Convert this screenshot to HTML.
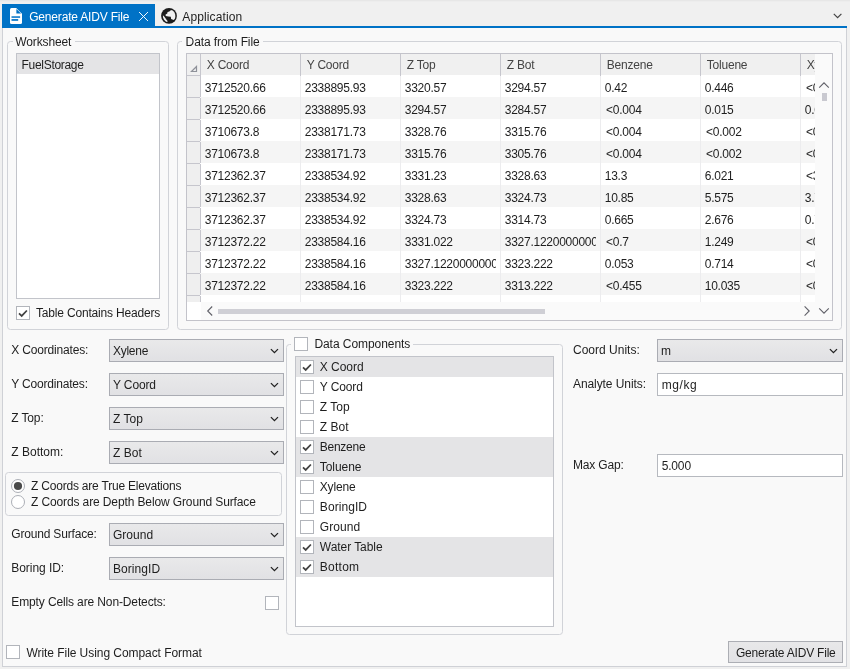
<!DOCTYPE html><html><head><meta charset="utf-8"><title>Generate AIDV File</title><style>
html,body{margin:0;padding:0;}
body{width:850px;height:669px;overflow:hidden;background:#f0f0f0;position:relative;font-family:"Liberation Sans",sans-serif;font-size:12px;color:#1e1e1e;}
div,span,svg{position:absolute;box-sizing:border-box;}
.t{white-space:nowrap;line-height:16px;height:16px;letter-spacing:-0.3px;}
.gb{border:1px solid #d1d3d8;border-radius:3.5px;}
.cb{width:14px;height:14px;background:#fff;border:1px solid #b2b5bb;}
.combo{height:23px;border:1px solid #aaacb3;background:linear-gradient(#e9e9ea,#e1e1e4);}
.tb{height:23px;border:1px solid #b6b9bf;background:#fff;}
.lb{border:1px solid #c2c4ca;background:#fff;}
.sel{background:#e4e4e6;}
</style></head><body><div id="root" style="left:0;top:0;width:850px;height:669px;will-change:transform">
<div style="left:0;top:0;width:850px;height:2px;background:linear-gradient(#e4e4e4,#f0f0f0)"></div>
<div style="left:2px;top:28px;width:845px;height:639px;background:#f9f9f9;border:1px solid #cfd1d6;border-top:none"></div>
<div style="left:2px;top:26px;width:845px;height:2px;background:#0072c6"></div>
<div style="left:2px;top:4px;width:153px;height:24px;background:#0072c6"></div>
<svg style="left:10px;top:8px" width="12" height="16" viewBox="0 0 12 16"><path d="M1.5 0 H6.2 L12 5.8 V14.5 Q12 16 10.5 16 H1.5 Q0 16 0 14.5 V1.5 Q0 0 1.5 0 Z" fill="#fff"/><path d="M6.4 0.9 V5.6 H11.1 Z" fill="#0072c6"/><rect x="1.5" y="8.3" width="8.6" height="1.5" fill="#0072c6"/><rect x="1.5" y="11.1" width="6.7" height="1.7" fill="#0072c6"/></svg>
<svg style="left:138px;top:11px" width="12" height="12" viewBox="0 0 12 12"><path d="M1 1 L10 10 M10 1 L1 10" stroke="#fff" stroke-width="0.95" fill="none"/></svg>
<svg style="left:161px;top:8px" width="16" height="16" viewBox="0 0 16 16"><circle cx="8" cy="7.9" r="7.9" fill="#1c1c1c"/><path d="M9.8 1.9 L11.7 2.6 L13.4 4.3 L14.2 6.4 L14.35 8.5 L14 10.4 L12.8 12.1 L11.4 11.4 L10.1 11.1 L9.8 8.8 L7.5 8.6 L4.7 8 L4.6 6.4 L6.3 5.6 L6.4 4.2 L8.1 3.4 L9.2 3 Z" fill="#f0f0f0"/><path d="M1.9 7.2 L2 9.6 L2.9 11.6 L4.4 13.2 L5.9 13.9 L6.8 13.3 L5.3 11.6 L4.3 10.1 L3.2 8.4 Z" fill="#f0f0f0"/></svg>
<svg style="left:832px;top:12px" width="12" height="8" viewBox="0 0 12 8"><path d="M1.8 1.8 L5.6 5.6 L9.4 1.8" stroke="#444" stroke-width="1.2" fill="none"/></svg>
<div class="gb" style="left:7px;top:41px;width:162px;height:289px"></div>
<div style="left:13px;top:36px;width:62px;height:12px;background:#f9f9f9"></div>
<div class="lb" style="left:16px;top:53px;width:144px;height:246px"><div class="sel" style="left:0;top:0;width:142px;height:20px"></div></div>
<div class="cb" style="left:16px;top:306px"></div>
<svg style="left:16px;top:306px" width="14" height="14" viewBox="0 0 14 14"><path d="M3 7.3 L5.7 9.9 L10.9 4.5" stroke="#424242" stroke-width="1.75" fill="none"/></svg>
<div class="gb" style="left:177px;top:41px;width:665px;height:289px"></div>
<div style="left:182px;top:36px;width:81px;height:12px;background:#f9f9f9"></div>
<div style="left:186px;top:53px;width:647px;height:268px;border:1px solid #c3c3ca;background:#fff;overflow:hidden" id="grid">
<div style="left:0;top:0;width:628px;height:22px;background:#f0f0f0;border-bottom:1px solid #c6c6cd"></div>
<div style="left:13px;top:21px;width:615px;height:22px;background:#fff"></div>
<div style="left:0;top:22px;width:14px;height:22px;background:#efefef;border-right:1px solid #c6c6cd;border-bottom:1px solid #c6c6cd"></div>
<div style="left:13px;top:43px;width:615px;height:23px;background:#f5f5f5"></div>
<div style="left:0;top:44px;width:14px;height:22px;background:#efefef;border-right:1px solid #c6c6cd;border-bottom:1px solid #c6c6cd"></div>
<div style="left:13px;top:65px;width:615px;height:22px;background:#fff"></div>
<div style="left:0;top:66px;width:14px;height:22px;background:#efefef;border-right:1px solid #c6c6cd;border-bottom:1px solid #c6c6cd"></div>
<div style="left:13px;top:87px;width:615px;height:23px;background:#f5f5f5"></div>
<div style="left:0;top:88px;width:14px;height:22px;background:#efefef;border-right:1px solid #c6c6cd;border-bottom:1px solid #c6c6cd"></div>
<div style="left:13px;top:109px;width:615px;height:22px;background:#fff"></div>
<div style="left:0;top:110px;width:14px;height:22px;background:#efefef;border-right:1px solid #c6c6cd;border-bottom:1px solid #c6c6cd"></div>
<div style="left:13px;top:131px;width:615px;height:23px;background:#f5f5f5"></div>
<div style="left:0;top:132px;width:14px;height:22px;background:#efefef;border-right:1px solid #c6c6cd;border-bottom:1px solid #c6c6cd"></div>
<div style="left:13px;top:153px;width:615px;height:22px;background:#fff"></div>
<div style="left:0;top:154px;width:14px;height:22px;background:#efefef;border-right:1px solid #c6c6cd;border-bottom:1px solid #c6c6cd"></div>
<div style="left:13px;top:175px;width:615px;height:23px;background:#f5f5f5"></div>
<div style="left:0;top:176px;width:14px;height:22px;background:#efefef;border-right:1px solid #c6c6cd;border-bottom:1px solid #c6c6cd"></div>
<div style="left:13px;top:197px;width:615px;height:22px;background:#fff"></div>
<div style="left:0;top:198px;width:14px;height:22px;background:#efefef;border-right:1px solid #c6c6cd;border-bottom:1px solid #c6c6cd"></div>
<div style="left:13px;top:219px;width:615px;height:23px;background:#f5f5f5"></div>
<div style="left:0;top:220px;width:14px;height:22px;background:#efefef;border-right:1px solid #c6c6cd;border-bottom:1px solid #c6c6cd"></div>
<div style="left:13px;top:241px;width:615px;height:22px;background:#fff"></div>
<div style="left:0;top:242px;width:14px;height:22px;background:#efefef;border-right:1px solid #c6c6cd;border-bottom:1px solid #c6c6cd"></div>
<div style="left:0;top:0;width:14px;height:22px;border-right:1px solid #c6c6cd"></div>
<svg style="left:3px;top:11px" width="8" height="8" viewBox="0 0 8 8"><path d="M6.5 1.5 V6.5 H1.5 Z" stroke="#8e9199" stroke-width="1.2" fill="none"/></svg>
<div style="left:113px;top:0;width:1px;height:22px;background:#c6c6cd"></div>
<div style="left:113px;top:22px;width:1px;height:226px;background:#ececee"></div>
<div style="left:213px;top:0;width:1px;height:22px;background:#c6c6cd"></div>
<div style="left:213px;top:22px;width:1px;height:226px;background:#ececee"></div>
<div style="left:313px;top:0;width:1px;height:22px;background:#c6c6cd"></div>
<div style="left:313px;top:22px;width:1px;height:226px;background:#ececee"></div>
<div style="left:413px;top:0;width:1px;height:22px;background:#c6c6cd"></div>
<div style="left:413px;top:22px;width:1px;height:226px;background:#ececee"></div>
<div style="left:513px;top:0;width:1px;height:22px;background:#c6c6cd"></div>
<div style="left:513px;top:22px;width:1px;height:226px;background:#ececee"></div>
<div style="left:613px;top:0;width:1px;height:22px;background:#c6c6cd"></div>
<div style="left:613px;top:22px;width:1px;height:226px;background:#ececee"></div>
<div style="left:713px;top:0;width:1px;height:22px;background:#c6c6cd"></div>
<div style="left:713px;top:22px;width:1px;height:226px;background:#ececee"></div>
<div style="left:14px;top:0;width:95px;height:22px;overflow:hidden"><span class="t" style="left:5.7px;top:3px;color:#444;letter-spacing:-0.2px">X Coord</span></div>
<div style="left:114px;top:0;width:95px;height:22px;overflow:hidden"><span class="t" style="left:5.7px;top:3px;color:#444;letter-spacing:-0.2px">Y Coord</span></div>
<div style="left:214px;top:0;width:95px;height:22px;overflow:hidden"><span class="t" style="left:5.7px;top:3px;color:#444;letter-spacing:-0.2px">Z Top</span></div>
<div style="left:314px;top:0;width:95px;height:22px;overflow:hidden"><span class="t" style="left:5.7px;top:3px;color:#444;letter-spacing:-0.2px">Z Bot</span></div>
<div style="left:414px;top:0;width:95px;height:22px;overflow:hidden"><span class="t" style="left:5.7px;top:3px;color:#444;letter-spacing:-0.2px">Benzene</span></div>
<div style="left:514px;top:0;width:95px;height:22px;overflow:hidden"><span class="t" style="left:5.7px;top:3px;color:#444;letter-spacing:-0.2px">Toluene</span></div>
<div style="left:614px;top:0;width:95px;height:22px;overflow:hidden"><span class="t" style="left:5.7px;top:3px;color:#444;letter-spacing:-0.2px">Xylene</span></div>
<div style="left:14px;top:22px;width:94.8px;height:22px;overflow:hidden"><span class="t" style="left:3.8px;top:4px;letter-spacing:-0.26px">3712520.66</span></div>
<div style="left:114px;top:22px;width:94.8px;height:22px;overflow:hidden"><span class="t" style="left:3.8px;top:4px;letter-spacing:-0.26px">2338895.93</span></div>
<div style="left:214px;top:22px;width:94.8px;height:22px;overflow:hidden"><span class="t" style="left:3.8px;top:4px;letter-spacing:-0.26px">3320.57</span></div>
<div style="left:314px;top:22px;width:94.8px;height:22px;overflow:hidden"><span class="t" style="left:3.8px;top:4px;letter-spacing:-0.26px">3294.57</span></div>
<div style="left:414px;top:22px;width:94.8px;height:22px;overflow:hidden"><span class="t" style="left:3.8px;top:4px;letter-spacing:-0.26px">0.42</span></div>
<div style="left:514px;top:22px;width:94.8px;height:22px;overflow:hidden"><span class="t" style="left:3.8px;top:4px;letter-spacing:-0.26px">0.446</span></div>
<div style="left:614px;top:22px;width:94.8px;height:22px;overflow:hidden"><span class="t" style="left:5.1px;top:4px;letter-spacing:-0.26px">&lt;0.004</span></div>
<div style="left:14px;top:44px;width:94.8px;height:22px;overflow:hidden"><span class="t" style="left:3.8px;top:4px;letter-spacing:-0.26px">3712520.66</span></div>
<div style="left:114px;top:44px;width:94.8px;height:22px;overflow:hidden"><span class="t" style="left:3.8px;top:4px;letter-spacing:-0.26px">2338895.93</span></div>
<div style="left:214px;top:44px;width:94.8px;height:22px;overflow:hidden"><span class="t" style="left:3.8px;top:4px;letter-spacing:-0.26px">3294.57</span></div>
<div style="left:314px;top:44px;width:94.8px;height:22px;overflow:hidden"><span class="t" style="left:3.8px;top:4px;letter-spacing:-0.26px">3284.57</span></div>
<div style="left:414px;top:44px;width:94.8px;height:22px;overflow:hidden"><span class="t" style="left:5.1px;top:4px;letter-spacing:-0.26px">&lt;0.004</span></div>
<div style="left:514px;top:44px;width:94.8px;height:22px;overflow:hidden"><span class="t" style="left:3.8px;top:4px;letter-spacing:-0.26px">0.015</span></div>
<div style="left:614px;top:44px;width:94.8px;height:22px;overflow:hidden"><span class="t" style="left:3.8px;top:4px;letter-spacing:-0.26px">0.012</span></div>
<div style="left:14px;top:66px;width:94.8px;height:22px;overflow:hidden"><span class="t" style="left:3.8px;top:4px;letter-spacing:-0.26px">3710673.8</span></div>
<div style="left:114px;top:66px;width:94.8px;height:22px;overflow:hidden"><span class="t" style="left:3.8px;top:4px;letter-spacing:-0.26px">2338171.73</span></div>
<div style="left:214px;top:66px;width:94.8px;height:22px;overflow:hidden"><span class="t" style="left:3.8px;top:4px;letter-spacing:-0.26px">3328.76</span></div>
<div style="left:314px;top:66px;width:94.8px;height:22px;overflow:hidden"><span class="t" style="left:3.8px;top:4px;letter-spacing:-0.26px">3315.76</span></div>
<div style="left:414px;top:66px;width:94.8px;height:22px;overflow:hidden"><span class="t" style="left:5.1px;top:4px;letter-spacing:-0.26px">&lt;0.004</span></div>
<div style="left:514px;top:66px;width:94.8px;height:22px;overflow:hidden"><span class="t" style="left:5.1px;top:4px;letter-spacing:-0.26px">&lt;0.002</span></div>
<div style="left:614px;top:66px;width:94.8px;height:22px;overflow:hidden"><span class="t" style="left:5.1px;top:4px;letter-spacing:-0.26px">&lt;0.004</span></div>
<div style="left:14px;top:88px;width:94.8px;height:22px;overflow:hidden"><span class="t" style="left:3.8px;top:4px;letter-spacing:-0.26px">3710673.8</span></div>
<div style="left:114px;top:88px;width:94.8px;height:22px;overflow:hidden"><span class="t" style="left:3.8px;top:4px;letter-spacing:-0.26px">2338171.73</span></div>
<div style="left:214px;top:88px;width:94.8px;height:22px;overflow:hidden"><span class="t" style="left:3.8px;top:4px;letter-spacing:-0.26px">3315.76</span></div>
<div style="left:314px;top:88px;width:94.8px;height:22px;overflow:hidden"><span class="t" style="left:3.8px;top:4px;letter-spacing:-0.26px">3305.76</span></div>
<div style="left:414px;top:88px;width:94.8px;height:22px;overflow:hidden"><span class="t" style="left:5.1px;top:4px;letter-spacing:-0.26px">&lt;0.004</span></div>
<div style="left:514px;top:88px;width:94.8px;height:22px;overflow:hidden"><span class="t" style="left:5.1px;top:4px;letter-spacing:-0.26px">&lt;0.002</span></div>
<div style="left:614px;top:88px;width:94.8px;height:22px;overflow:hidden"><span class="t" style="left:5.1px;top:4px;letter-spacing:-0.26px">&lt;0.004</span></div>
<div style="left:14px;top:110px;width:94.8px;height:22px;overflow:hidden"><span class="t" style="left:3.8px;top:4px;letter-spacing:-0.26px">3712362.37</span></div>
<div style="left:114px;top:110px;width:94.8px;height:22px;overflow:hidden"><span class="t" style="left:3.8px;top:4px;letter-spacing:-0.26px">2338534.92</span></div>
<div style="left:214px;top:110px;width:94.8px;height:22px;overflow:hidden"><span class="t" style="left:3.8px;top:4px;letter-spacing:-0.26px">3331.23</span></div>
<div style="left:314px;top:110px;width:94.8px;height:22px;overflow:hidden"><span class="t" style="left:3.8px;top:4px;letter-spacing:-0.26px">3328.63</span></div>
<div style="left:414px;top:110px;width:94.8px;height:22px;overflow:hidden"><span class="t" style="left:3.8px;top:4px;letter-spacing:-0.26px">13.3</span></div>
<div style="left:514px;top:110px;width:94.8px;height:22px;overflow:hidden"><span class="t" style="left:3.8px;top:4px;letter-spacing:-0.26px">6.021</span></div>
<div style="left:614px;top:110px;width:94.8px;height:22px;overflow:hidden"><span class="t" style="left:5.1px;top:4px;letter-spacing:-0.26px">&lt;3.5</span></div>
<div style="left:14px;top:132px;width:94.8px;height:22px;overflow:hidden"><span class="t" style="left:3.8px;top:4px;letter-spacing:-0.26px">3712362.37</span></div>
<div style="left:114px;top:132px;width:94.8px;height:22px;overflow:hidden"><span class="t" style="left:3.8px;top:4px;letter-spacing:-0.26px">2338534.92</span></div>
<div style="left:214px;top:132px;width:94.8px;height:22px;overflow:hidden"><span class="t" style="left:3.8px;top:4px;letter-spacing:-0.26px">3328.63</span></div>
<div style="left:314px;top:132px;width:94.8px;height:22px;overflow:hidden"><span class="t" style="left:3.8px;top:4px;letter-spacing:-0.26px">3324.73</span></div>
<div style="left:414px;top:132px;width:94.8px;height:22px;overflow:hidden"><span class="t" style="left:3.8px;top:4px;letter-spacing:-0.26px">10.85</span></div>
<div style="left:514px;top:132px;width:94.8px;height:22px;overflow:hidden"><span class="t" style="left:3.8px;top:4px;letter-spacing:-0.26px">5.575</span></div>
<div style="left:614px;top:132px;width:94.8px;height:22px;overflow:hidden"><span class="t" style="left:3.8px;top:4px;letter-spacing:-0.26px">3.725</span></div>
<div style="left:14px;top:154px;width:94.8px;height:22px;overflow:hidden"><span class="t" style="left:3.8px;top:4px;letter-spacing:-0.26px">3712362.37</span></div>
<div style="left:114px;top:154px;width:94.8px;height:22px;overflow:hidden"><span class="t" style="left:3.8px;top:4px;letter-spacing:-0.26px">2338534.92</span></div>
<div style="left:214px;top:154px;width:94.8px;height:22px;overflow:hidden"><span class="t" style="left:3.8px;top:4px;letter-spacing:-0.26px">3324.73</span></div>
<div style="left:314px;top:154px;width:94.8px;height:22px;overflow:hidden"><span class="t" style="left:3.8px;top:4px;letter-spacing:-0.26px">3314.73</span></div>
<div style="left:414px;top:154px;width:94.8px;height:22px;overflow:hidden"><span class="t" style="left:3.8px;top:4px;letter-spacing:-0.26px">0.665</span></div>
<div style="left:514px;top:154px;width:94.8px;height:22px;overflow:hidden"><span class="t" style="left:3.8px;top:4px;letter-spacing:-0.26px">2.676</span></div>
<div style="left:614px;top:154px;width:94.8px;height:22px;overflow:hidden"><span class="t" style="left:3.8px;top:4px;letter-spacing:-0.26px">0.75</span></div>
<div style="left:14px;top:176px;width:94.8px;height:22px;overflow:hidden"><span class="t" style="left:3.8px;top:4px;letter-spacing:-0.26px">3712372.22</span></div>
<div style="left:114px;top:176px;width:94.8px;height:22px;overflow:hidden"><span class="t" style="left:3.8px;top:4px;letter-spacing:-0.26px">2338584.16</span></div>
<div style="left:214px;top:176px;width:94.8px;height:22px;overflow:hidden"><span class="t" style="left:3.8px;top:4px;letter-spacing:-0.26px">3331.022</span></div>
<div style="left:314px;top:176px;width:94.8px;height:22px;overflow:hidden"><span class="t" style="left:3.8px;top:4px;letter-spacing:-0.26px">3327.1220000000003</span></div>
<div style="left:414px;top:176px;width:94.8px;height:22px;overflow:hidden"><span class="t" style="left:5.1px;top:4px;letter-spacing:-0.26px">&lt;0.7</span></div>
<div style="left:514px;top:176px;width:94.8px;height:22px;overflow:hidden"><span class="t" style="left:3.8px;top:4px;letter-spacing:-0.26px">1.249</span></div>
<div style="left:614px;top:176px;width:94.8px;height:22px;overflow:hidden"><span class="t" style="left:5.1px;top:4px;letter-spacing:-0.26px">&lt;0.7</span></div>
<div style="left:14px;top:198px;width:94.8px;height:22px;overflow:hidden"><span class="t" style="left:3.8px;top:4px;letter-spacing:-0.26px">3712372.22</span></div>
<div style="left:114px;top:198px;width:94.8px;height:22px;overflow:hidden"><span class="t" style="left:3.8px;top:4px;letter-spacing:-0.26px">2338584.16</span></div>
<div style="left:214px;top:198px;width:94.8px;height:22px;overflow:hidden"><span class="t" style="left:3.8px;top:4px;letter-spacing:-0.26px">3327.1220000000003</span></div>
<div style="left:314px;top:198px;width:94.8px;height:22px;overflow:hidden"><span class="t" style="left:3.8px;top:4px;letter-spacing:-0.26px">3323.222</span></div>
<div style="left:414px;top:198px;width:94.8px;height:22px;overflow:hidden"><span class="t" style="left:3.8px;top:4px;letter-spacing:-0.26px">0.053</span></div>
<div style="left:514px;top:198px;width:94.8px;height:22px;overflow:hidden"><span class="t" style="left:3.8px;top:4px;letter-spacing:-0.26px">0.714</span></div>
<div style="left:614px;top:198px;width:94.8px;height:22px;overflow:hidden"><span class="t" style="left:5.1px;top:4px;letter-spacing:-0.26px">&lt;0.053</span></div>
<div style="left:14px;top:220px;width:94.8px;height:22px;overflow:hidden"><span class="t" style="left:3.8px;top:4px;letter-spacing:-0.26px">3712372.22</span></div>
<div style="left:114px;top:220px;width:94.8px;height:22px;overflow:hidden"><span class="t" style="left:3.8px;top:4px;letter-spacing:-0.26px">2338584.16</span></div>
<div style="left:214px;top:220px;width:94.8px;height:22px;overflow:hidden"><span class="t" style="left:3.8px;top:4px;letter-spacing:-0.26px">3323.222</span></div>
<div style="left:314px;top:220px;width:94.8px;height:22px;overflow:hidden"><span class="t" style="left:3.8px;top:4px;letter-spacing:-0.26px">3313.222</span></div>
<div style="left:414px;top:220px;width:94.8px;height:22px;overflow:hidden"><span class="t" style="left:5.1px;top:4px;letter-spacing:-0.26px">&lt;0.455</span></div>
<div style="left:514px;top:220px;width:94.8px;height:22px;overflow:hidden"><span class="t" style="left:3.8px;top:4px;letter-spacing:-0.26px">10.035</span></div>
<div style="left:614px;top:220px;width:94.8px;height:22px;overflow:hidden"><span class="t" style="left:5.1px;top:4px;letter-spacing:-0.26px">&lt;0.455</span></div>
<div style="left:628px;top:0;width:17px;height:266px;background:#fafafa"></div>
<div style="left:0;top:248px;width:14px;height:18px;background:#fff"></div>
<div style="left:14px;top:248px;width:632px;height:18px;background:#fafafa"></div>
<svg style="left:630px;top:26px" width="14" height="10" viewBox="0 0 14 10"><path d="M2.2 7.6 L7 2.8 L11.8 7.6" stroke="#606068" stroke-width="1.1" fill="none"/></svg>
<div style="left:634.5px;top:39px;width:5px;height:7.5px;background:#c9c9d0"></div>
<svg style="left:630px;top:252px" width="14" height="10" viewBox="0 0 14 10"><path d="M2.2 2.4 L7 7.2 L11.8 2.4" stroke="#606068" stroke-width="1.1" fill="none"/></svg>
<svg style="left:615px;top:250.3px" width="10" height="14" viewBox="0 0 10 14"><path d="M2.6 2.4 L7.2 7 L2.6 11.6" stroke="#606068" stroke-width="1.1" fill="none"/></svg>
<svg style="left:18px;top:250px" width="10" height="14" viewBox="0 0 10 14"><path d="M7.2 2.5 L2.7 7 L7.2 11.5" stroke="#606068" stroke-width="1.1" fill="none"/></svg>
<div style="left:31px;top:255px;width:327px;height:5px;background:#cfcfd5"></div>
</div>
<div class="combo" style="left:109px;top:339px;width:175px"></div>
<svg style="left:268px;top:347px" width="12" height="8" viewBox="0 0 12 8"><path d="M2.9 2.1 L6.45 5.6 L10 2.1" stroke="#222" stroke-width="1.3" fill="none"/></svg>
<div class="combo" style="left:109px;top:373px;width:175px"></div>
<svg style="left:268px;top:381px" width="12" height="8" viewBox="0 0 12 8"><path d="M2.9 2.1 L6.45 5.6 L10 2.1" stroke="#222" stroke-width="1.3" fill="none"/></svg>
<div class="combo" style="left:109px;top:407px;width:175px"></div>
<svg style="left:268px;top:415px" width="12" height="8" viewBox="0 0 12 8"><path d="M2.9 2.1 L6.45 5.6 L10 2.1" stroke="#222" stroke-width="1.3" fill="none"/></svg>
<div class="combo" style="left:109px;top:441px;width:175px"></div>
<svg style="left:268px;top:449px" width="12" height="8" viewBox="0 0 12 8"><path d="M2.9 2.1 L6.45 5.6 L10 2.1" stroke="#222" stroke-width="1.3" fill="none"/></svg>
<div class="gb" style="left:5px;top:472px;width:277px;height:44px"></div>
<svg style="left:10px;top:478px" width="16" height="16" viewBox="0 0 16 16"><circle cx="8" cy="8" r="6.5" fill="#fff" stroke="#acafb6" stroke-width="1"/><circle cx="8" cy="8" r="4.1" fill="#4a4a4a"/></svg>
<svg style="left:10px;top:494px" width="16" height="16" viewBox="0 0 16 16"><circle cx="8" cy="8" r="6.5" fill="#fff" stroke="#acafb6" stroke-width="1"/></svg>
<div class="combo" style="left:109px;top:523px;width:175px"></div>
<svg style="left:268px;top:531px" width="12" height="8" viewBox="0 0 12 8"><path d="M2.9 2.1 L6.45 5.6 L10 2.1" stroke="#222" stroke-width="1.3" fill="none"/></svg>
<div class="combo" style="left:109px;top:557px;width:175px"></div>
<svg style="left:268px;top:565px" width="12" height="8" viewBox="0 0 12 8"><path d="M2.9 2.1 L6.45 5.6 L10 2.1" stroke="#222" stroke-width="1.3" fill="none"/></svg>
<div class="cb" style="left:265px;top:596px"></div>
<div class="cb" style="left:6px;top:645px"></div>
<div class="gb" style="left:286px;top:344px;width:277px;height:291px"></div>
<div style="left:291px;top:336px;width:122px;height:16px;background:#f9f9f9"></div>
<div class="cb" style="left:294px;top:337px"></div>
<div class="lb" style="left:295px;top:356px;width:259px;height:271px"></div>
<div class="sel" style="left:296px;top:357px;width:257px;height:20px"></div>
<div class="cb" style="left:300px;top:360px"></div>
<svg style="left:300px;top:360px" width="14" height="14" viewBox="0 0 14 14"><path d="M3 7.3 L5.7 9.9 L10.9 4.5" stroke="#424242" stroke-width="1.75" fill="none"/></svg>
<div class="cb" style="left:300px;top:380px"></div>
<div class="cb" style="left:300px;top:400px"></div>
<div class="cb" style="left:300px;top:420px"></div>
<div class="sel" style="left:296px;top:437px;width:257px;height:20px"></div>
<div class="cb" style="left:300px;top:440px"></div>
<svg style="left:300px;top:440px" width="14" height="14" viewBox="0 0 14 14"><path d="M3 7.3 L5.7 9.9 L10.9 4.5" stroke="#424242" stroke-width="1.75" fill="none"/></svg>
<div class="sel" style="left:296px;top:457px;width:257px;height:20px"></div>
<div class="cb" style="left:300px;top:460px"></div>
<svg style="left:300px;top:460px" width="14" height="14" viewBox="0 0 14 14"><path d="M3 7.3 L5.7 9.9 L10.9 4.5" stroke="#424242" stroke-width="1.75" fill="none"/></svg>
<div class="cb" style="left:300px;top:480px"></div>
<div class="cb" style="left:300px;top:500px"></div>
<div class="cb" style="left:300px;top:520px"></div>
<div class="sel" style="left:296px;top:537px;width:257px;height:20px"></div>
<div class="cb" style="left:300px;top:540px"></div>
<svg style="left:300px;top:540px" width="14" height="14" viewBox="0 0 14 14"><path d="M3 7.3 L5.7 9.9 L10.9 4.5" stroke="#424242" stroke-width="1.75" fill="none"/></svg>
<div class="sel" style="left:296px;top:557px;width:257px;height:20px"></div>
<div class="cb" style="left:300px;top:560px"></div>
<svg style="left:300px;top:560px" width="14" height="14" viewBox="0 0 14 14"><path d="M3 7.3 L5.7 9.9 L10.9 4.5" stroke="#424242" stroke-width="1.75" fill="none"/></svg>
<div class="combo" style="left:657px;top:339px;width:186px"></div>
<svg style="left:827px;top:347px" width="12" height="8" viewBox="0 0 12 8"><path d="M2.9 2.1 L6.45 5.6 L10 2.1" stroke="#222" stroke-width="1.3" fill="none"/></svg>
<div class="tb" style="left:657px;top:373px;width:186px"></div>
<div class="tb" style="left:657px;top:454px;width:186px"></div>
<div style="left:728px;top:641px;width:115px;height:22px;border:1px solid #acaeb4;background:linear-gradient(#e8e8e9,#e2e2e5)"></div>
<span class="t" id="tab1" style="left:29.2px;top:8.8px;color:#fff;letter-spacing:-0.180px;">Generate AIDV File</span>
<span class="t" id="tab2" style="left:182.3px;top:8.8px;color:#1e1e1e;letter-spacing:0.116px;">Application</span>
<span class="t" id="ws" style="left:15.3px;top:34.3px;color:#1e1e1e;letter-spacing:-0.138px;">Worksheet</span>
<span class="t" id="fs" style="left:21.6px;top:56.8px;color:#1e1e1e;letter-spacing:-0.307px;">FuelStorage</span>
<span class="t" id="tch" style="left:36.0px;top:304.8px;color:#1e1e1e;letter-spacing:-0.181px;">Table Contains Headers</span>
<span class="t" id="dff" style="left:185.6px;top:34.3px;color:#1e1e1e;letter-spacing:-0.097px;">Data from File</span>
<span class="t" id="ll0" style="left:11.3px;top:341.8px;color:#1e1e1e;letter-spacing:-0.178px;">X Coordinates:</span>
<span class="t" id="lc0" style="left:113.0px;top:342.8px;color:#1e1e1e;letter-spacing:-0.267px;">Xylene</span>
<span class="t" id="ll1" style="left:11.3px;top:375.8px;color:#1e1e1e;letter-spacing:-0.191px;">Y Coordinates:</span>
<span class="t" id="lc1" style="left:113.0px;top:376.8px;color:#1e1e1e;letter-spacing:-0.130px;">Y Coord</span>
<span class="t" id="ll2" style="left:11.3px;top:409.8px;color:#1e1e1e;letter-spacing:-0.140px;">Z Top:</span>
<span class="t" id="lc2" style="left:113.0px;top:410.8px;color:#1e1e1e;letter-spacing:0.021px;">Z Top</span>
<span class="t" id="ll3" style="left:11.3px;top:443.8px;color:#1e1e1e;letter-spacing:0.009px;">Z Bottom:</span>
<span class="t" id="lc3" style="left:113.0px;top:444.8px;color:#1e1e1e;letter-spacing:0.022px;">Z Bot</span>
<span class="t" id="r1" style="left:31.0px;top:477.8px;color:#1e1e1e;letter-spacing:-0.206px;">Z Coords are True Elevations</span>
<span class="t" id="r2" style="left:31.0px;top:493.8px;color:#1e1e1e;letter-spacing:-0.119px;">Z Coords are Depth Below Ground Surface</span>
<span class="t" id="gsl" style="left:11.3px;top:525.8px;color:#1e1e1e;letter-spacing:-0.184px;">Ground Surface:</span>
<span class="t" id="gsc" style="left:113.0px;top:526.8px;color:#1e1e1e;letter-spacing:0.011px;">Ground</span>
<span class="t" id="bil" style="left:11.3px;top:559.8px;color:#1e1e1e;letter-spacing:-0.056px;">Boring ID:</span>
<span class="t" id="bic" style="left:113.0px;top:560.8px;color:#1e1e1e;letter-spacing:0.052px;">BoringID</span>
<span class="t" id="ecl" style="left:11.3px;top:593.8px;color:#1e1e1e;letter-spacing:-0.127px;">Empty Cells are Non-Detects:</span>
<span class="t" id="wf" style="left:26.5px;top:644.8px;color:#1e1e1e;letter-spacing:-0.060px;">Write File Using Compact Format</span>
<span class="t" id="dc" style="left:314.4px;top:335.8px;color:#1e1e1e;letter-spacing:-0.056px;">Data Components</span>
<span class="t" id="it0" style="left:319.8px;top:359.3px;color:#1e1e1e;letter-spacing:-0.033px;">X Coord</span>
<span class="t" id="it1" style="left:319.8px;top:379.3px;color:#1e1e1e;letter-spacing:-0.116px;">Y Coord</span>
<span class="t" id="it2" style="left:319.8px;top:399.3px;color:#1e1e1e;letter-spacing:0.041px;">Z Top</span>
<span class="t" id="it3" style="left:319.8px;top:419.3px;color:#1e1e1e;letter-spacing:0.043px;">Z Bot</span>
<span class="t" id="it4" style="left:319.8px;top:439.3px;color:#1e1e1e;letter-spacing:-0.268px;">Benzene</span>
<span class="t" id="it5" style="left:319.8px;top:459.3px;color:#1e1e1e;letter-spacing:-0.064px;">Toluene</span>
<span class="t" id="it6" style="left:319.8px;top:479.3px;color:#1e1e1e;letter-spacing:-0.184px;">Xylene</span>
<span class="t" id="it7" style="left:319.8px;top:499.3px;color:#1e1e1e;letter-spacing:0.077px;">BoringID</span>
<span class="t" id="it8" style="left:319.8px;top:519.3px;color:#1e1e1e;letter-spacing:0.095px;">Ground</span>
<span class="t" id="it9" style="left:319.8px;top:539.3px;color:#1e1e1e;letter-spacing:-0.052px;">Water Table</span>
<span class="t" id="it10" style="left:319.8px;top:559.3px;color:#1e1e1e;letter-spacing:0.247px;">Bottom</span>
<span class="t" id="cul" style="left:573.0px;top:341.8px;color:#1e1e1e;letter-spacing:0.008px;">Coord Units:</span>
<span class="t" id="cuc" style="left:661.0px;top:342.8px;color:#1e1e1e;">m</span>
<span class="t" id="aul" style="left:573.0px;top:375.8px;color:#1e1e1e;letter-spacing:-0.082px;">Analyte Units:</span>
<span class="t" id="auv" style="left:661.7px;top:376.8px;color:#1e1e1e;letter-spacing:0.562px;">mg/kg</span>
<span class="t" id="mgl" style="left:573.0px;top:456.8px;color:#1e1e1e;letter-spacing:-0.166px;">Max Gap:</span>
<span class="t" id="mgv" style="left:661.7px;top:457.8px;color:#1e1e1e;letter-spacing:-0.166px;">5.000</span>
<span class="t" id="btn" style="left:735.9px;top:645.1px;color:#1e1e1e;letter-spacing:-0.205px;">Generate AIDV File</span>
</div></body></html>
